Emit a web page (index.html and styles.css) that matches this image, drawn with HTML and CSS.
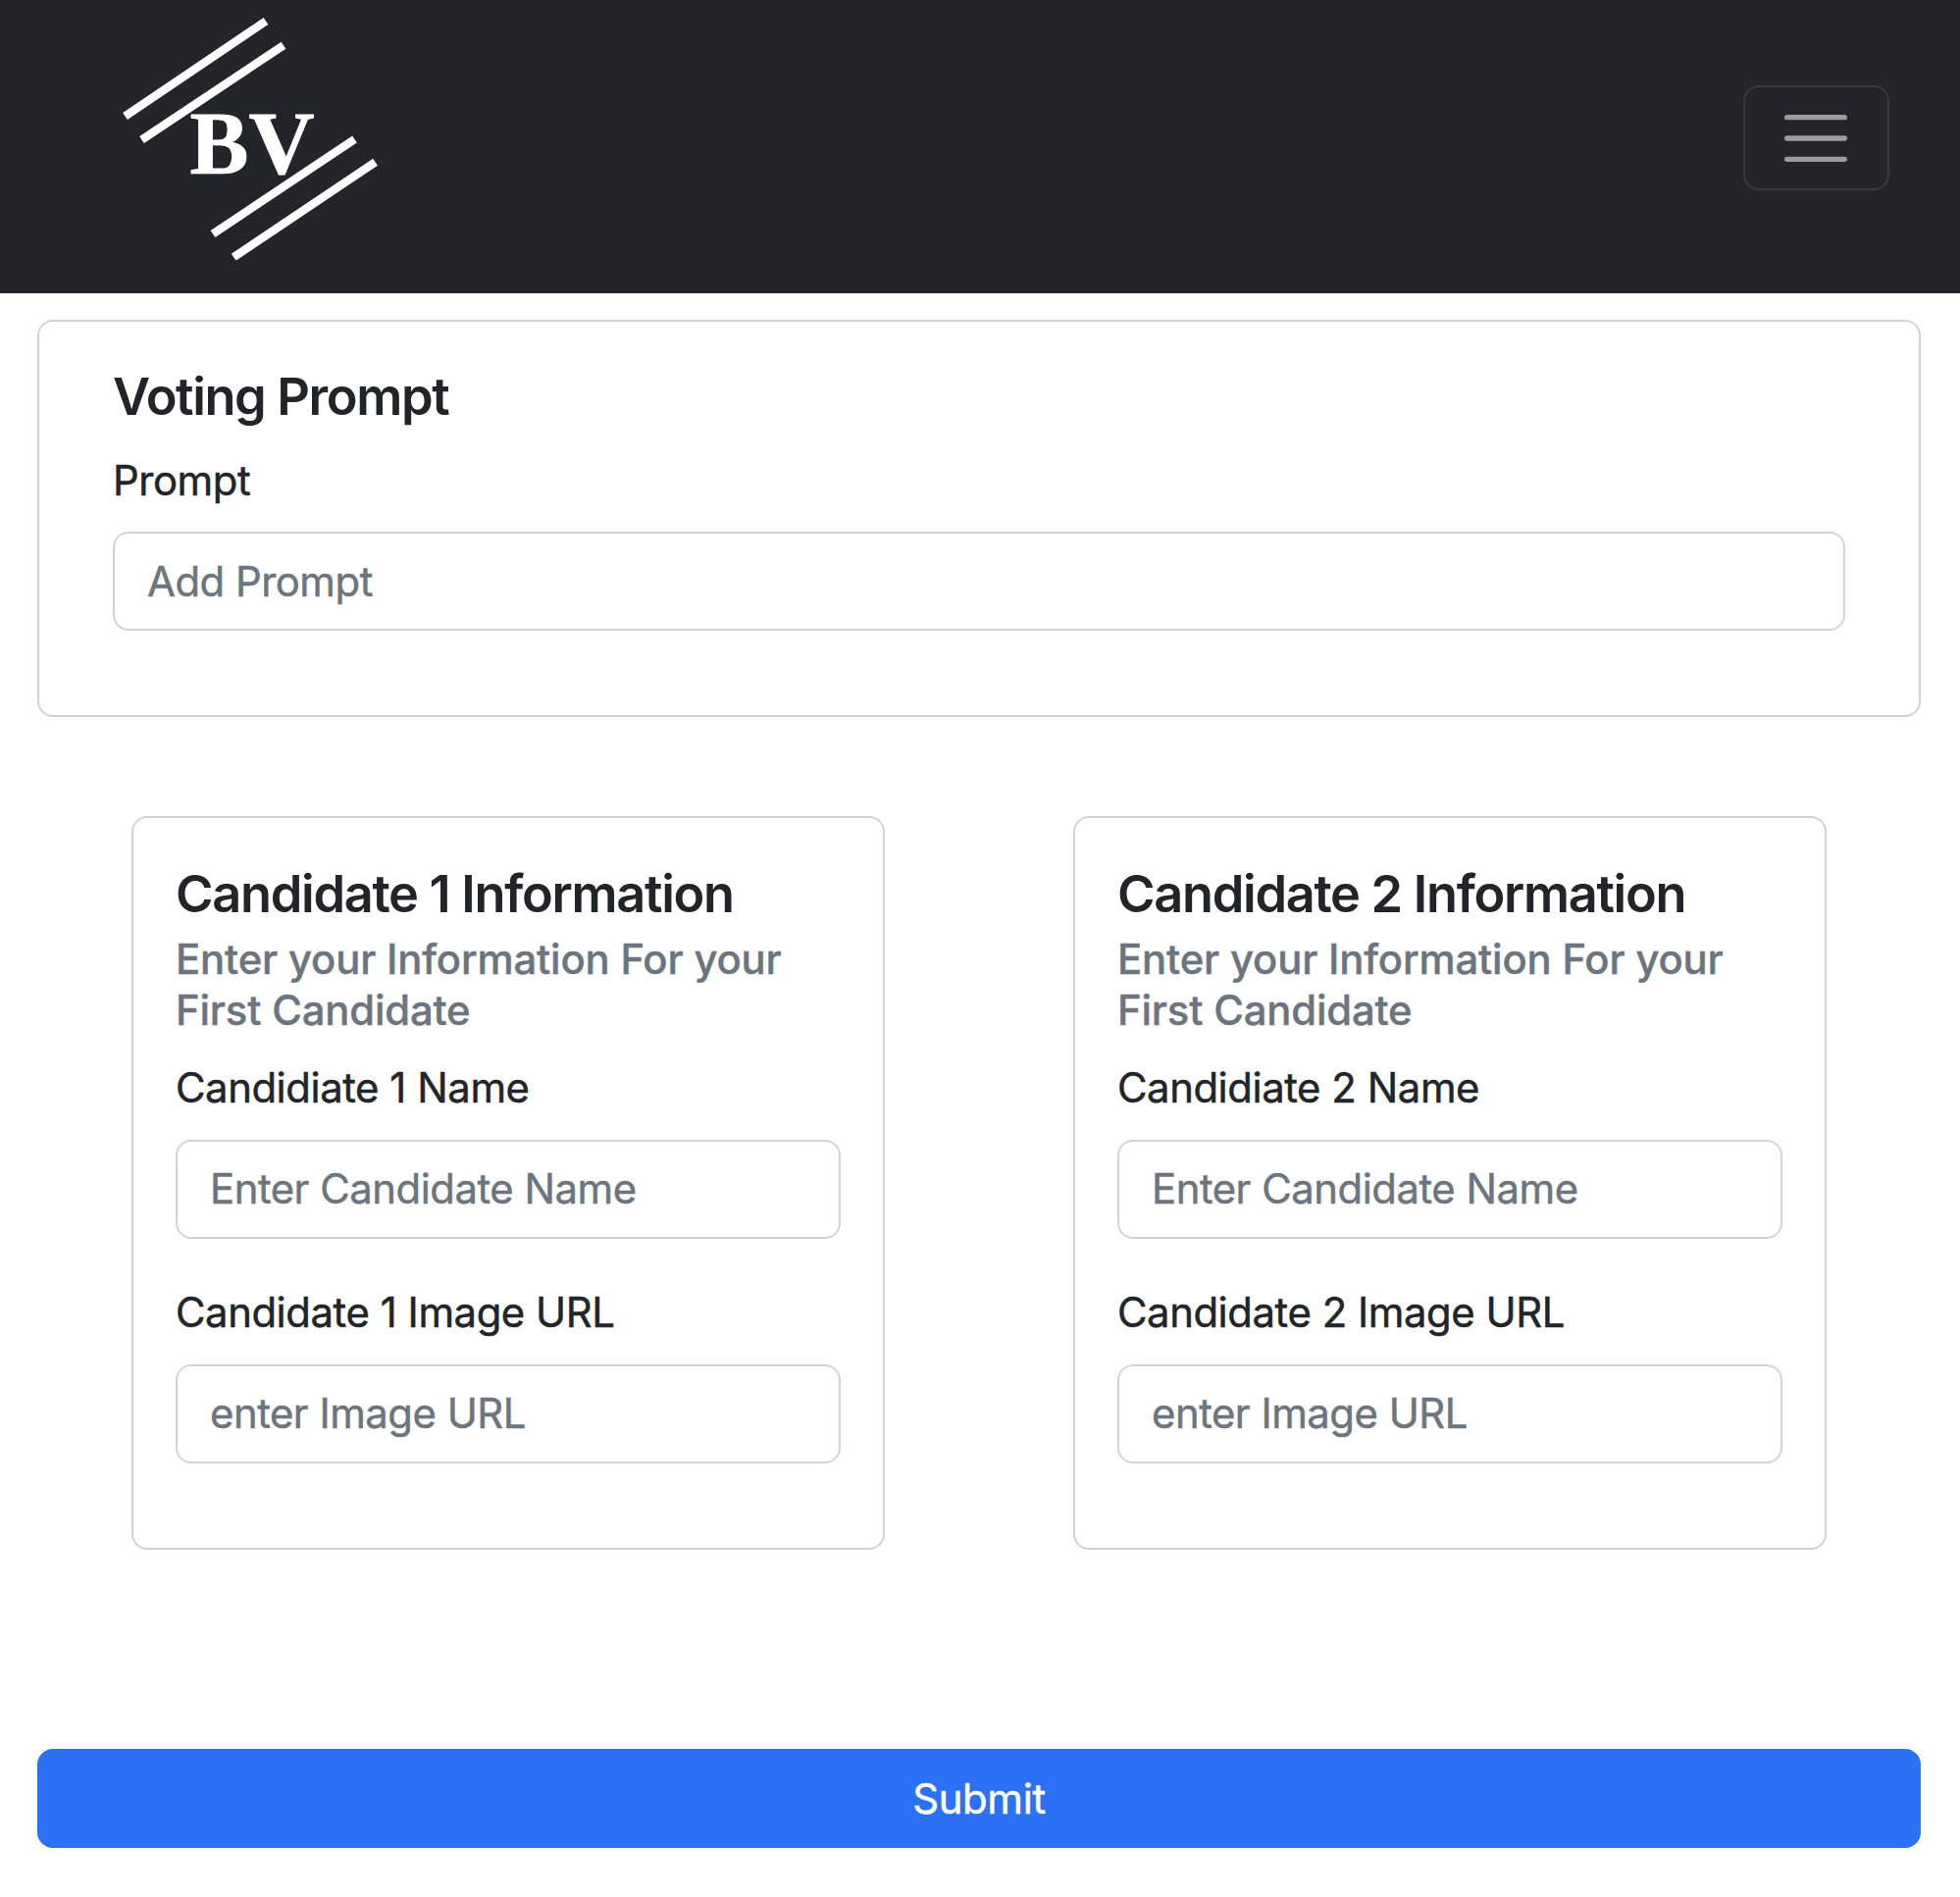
FILE: index.html
```html
<!DOCTYPE html>
<html lang="en">
<head>
<meta charset="utf-8">
<title>Create Vote</title>
<link rel="stylesheet" href="styles.css">
</head>
<body>
<nav class="navbar">
  <a class="brand" href="#" aria-label="BV home">
    <svg class="logo" width="256" height="265" viewBox="0 0 256 265">
      <g stroke="#fff" stroke-width="8.4">
        <path d="M27.500 118.500L171 21.500M44.500 142.500L189 46.200"/>
        <path d="M117 238.500L261.500 141.900M138.200 262.200L282.600 165.300"/>
      </g>
      <text class="logo-text" x="93.500" y="176.500" textLength="60" lengthAdjust="spacingAndGlyphs">B</text>
      <text class="logo-text" x="153.500" y="176.500" textLength="67" lengthAdjust="spacingAndGlyphs">V</text>
    </svg>
  </a>
  <button class="toggler" type="button" aria-label="Toggle navigation">
    <svg width="80" height="80" viewBox="0 0 30 30"><path stroke="rgba(255,255,255,.55)" stroke-linecap="round" stroke-miterlimit="10" stroke-width="2" d="M4 7h22M4 15h22M4 23h22"/></svg>
  </button>
</nav>
<form class="page">
  <section class="card prompt-card">
    <h5 class="title">Voting Prompt</h5>
    <label class="label" for="prompt">Prompt</label>
    <input class="control" id="prompt" type="text" placeholder="Add Prompt">
  </section>
  <div class="candidates">
    <section class="card">
      <h5 class="title">Candidate 1 Information</h5>
      <h6 class="subtitle">Enter your Information For your First Candidate</h6>
      <label class="label" for="name1">Candidiate 1 Name</label>
      <input class="control" id="name1" type="text" placeholder="Enter Candidate Name">
      <label class="label" for="image1">Candidate 1 Image URL</label>
      <input class="control" id="image1" type="text" placeholder="enter Image URL">
    </section>
    <section class="card">
      <h5 class="title">Candidate 2 Information</h5>
      <h6 class="subtitle">Enter your Information For your First Candidate</h6>
      <label class="label" for="name2">Candidiate 2 Name</label>
      <input class="control" id="name2" type="text" placeholder="Enter Candidate Name">
      <label class="label" for="image2">Candidate 2 Image URL</label>
      <input class="control" id="image2" type="text" placeholder="enter Image URL">
    </section>
  </div>
  <button class="submit" type="button">Submit</button>
</form>
</body>
</html>
```
FILE: styles.css
```css
*, *::before, *::after { box-sizing: border-box; }

body {
  margin: 0;
  background: #fff;
  color: #212529;
  font-family: Inter, "Liberation Sans", sans-serif;
  font-size: 41.8px;
  line-height: 64px;
}

.navbar {
  display: flex;
  justify-content: space-between;
  align-items: flex-start;
  height: 299px;
  padding: 0 72px 0 100px;
  background: #222529;
}

.brand { display: block; height: 265px; }

.logo { display: block; width: 256px; overflow: visible; clip-path: inset(0 -60px 0 0); }
.logo path { fill: none; }

.logo-text {
  fill: #fff;
  stroke: #fff;
  stroke-width: .8px;
  font-family: "Liberation Serif", serif;
  font-size: 92px;
  font-weight: 700;
}

.toggler {
  display: grid;
  place-items: center;
  width: 149px;
  height: 107px;
  margin: 87px 0 0;
  padding: 0 1px 0 0;
  border: 2px solid rgba(255, 255, 255, .1);
  border-radius: 16px;
  background: transparent;
}

.toggler svg { display: block; fill: none; }

.page { padding: 27px 40px 0 38px; }

.card {
  display: flex;
  flex-direction: column;
  border: 2px solid #d2d2d2;
  border-radius: 16px;
  padding: 45px 43px 0;
}

.prompt-card { height: 405px; padding: 44px 75px 0; }

.title {
  margin: 0;
  font-size: 52.3px;
  font-weight: 600;
  line-height: 64px;
  letter-spacing: -1.3px;
  white-space: nowrap;
}

.prompt-card .title { margin-bottom: 22px; letter-spacing: -1.38px; }

.subtitle {
  margin: 9px 0 21px;
  color: #6c757d;
  font-size: 41.8px;
  font-weight: 500;
  line-height: 52px;
  letter-spacing: -.17px;
  -webkit-text-stroke: .4px;
}

.label {
  display: block;
  height: 64px;
  margin-bottom: 21px;
  letter-spacing: -.42px;
  -webkit-text-stroke: .5px;
}

.prompt-card .label { margin-bottom: 20px; }

.control {
  width: 100%;
  height: 101px;
  margin: 0 0 43px;
  padding: 0 33px;
  border: 2px solid #ced4da;
  border-radius: 16px;
  background: #fff;
  color: #212529;
  font: inherit;
  letter-spacing: -.46px;
  -webkit-text-stroke: .5px;
}

.control::placeholder { color: #6c757d; opacity: 1; }

.candidates {
  display: grid;
  grid-template-columns: 768px 768px;
  gap: 192px;
  margin: 101px 96px 0;
}

.candidates .card { height: 748px; }
.candidates .control { padding-bottom: 2px; }

.submit {
  display: block;
  width: 100%;
  height: 101px;
  margin-top: 203px;
  padding: 0;
  border: 0;
  border-radius: 16px;
  background: #2c71f5;
  color: #fff;
  font: inherit;
  letter-spacing: -.3px;
  -webkit-text-stroke: .5px;
}
```
